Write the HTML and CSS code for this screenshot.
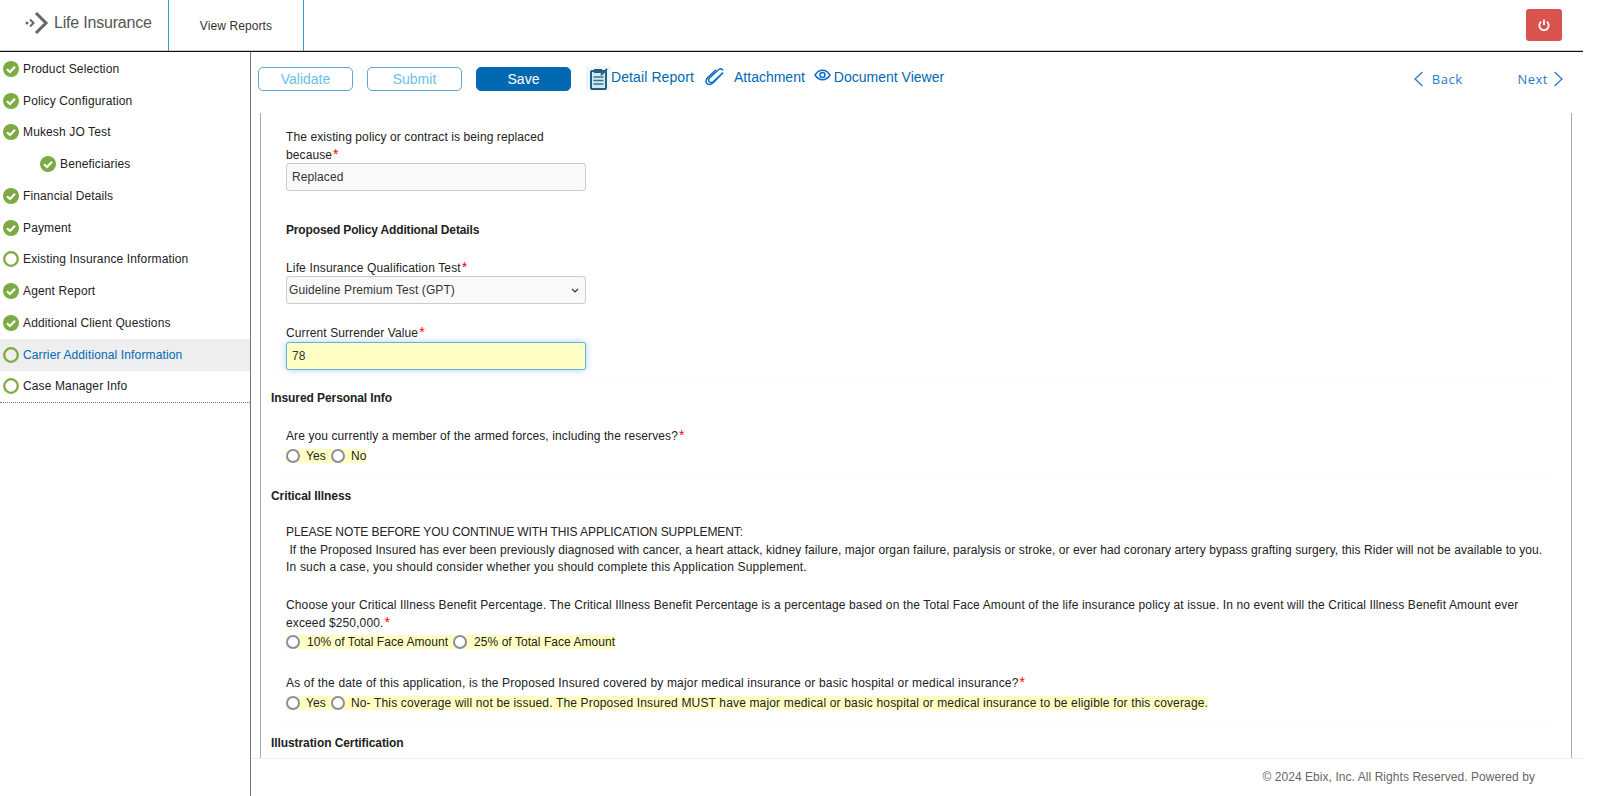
FILE: index.html
```html
<!DOCTYPE html>
<html lang="en">
<head>
<meta charset="utf-8">
<title>Life Insurance</title>
<link rel="stylesheet" href="styles.css">
</head>
<body>
<header class="topbar">
  <div class="brand">
    <svg class="brand-mark" width="24" height="24" viewBox="0 0 24 24"><circle cx="2" cy="12" r="1.500" fill="#666"/><path d="M5 8.500 8.500 12 5 15.500" fill="none" stroke="#666" stroke-width="2"/><path d="M11 2 21 12 11 22" fill="none" stroke="#666" stroke-width="3"/></svg>
    <span>Life Insurance</span>
  </div>
  <nav class="topnav"><a>View Reports</a></nav>
  <button class="power" aria-label="Log out"><svg width="14" height="14" viewBox="0 0 14 14"><path d="M4.200 3.600a4.700 4.700 0 1 0 5.600 0" fill="none" stroke="#fff" stroke-width="1.800"/><path d="M7 1.500v5.500" stroke="#fff" stroke-width="1.800"/></svg></button>
</header>
<div class="shell">
  <aside class="sidebar">
    <ul class="steps">
      <li class="step"><svg class="ic"><use href="#done"/></svg>Product Selection</li>
      <li class="step"><svg class="ic"><use href="#done"/></svg>Policy Configuration</li>
      <li class="step"><svg class="ic"><use href="#done"/></svg>Mukesh JO Test</li>
      <li class="step sub"><svg class="ic"><use href="#done"/></svg>Beneficiaries</li>
      <li class="step"><svg class="ic"><use href="#done"/></svg>Financial Details</li>
      <li class="step"><svg class="ic"><use href="#done"/></svg>Payment</li>
      <li class="step"><svg class="ic"><use href="#open"/></svg>Existing Insurance Information</li>
      <li class="step"><svg class="ic"><use href="#done"/></svg>Agent Report</li>
      <li class="step"><svg class="ic"><use href="#done"/></svg>Additional Client Questions</li>
      <li class="step active"><svg class="ic"><use href="#open"/></svg>Carrier Additional Information</li>
      <li class="step"><svg class="ic"><use href="#open"/></svg>Case Manager Info</li>
    </ul>
  </aside>
  <main class="main">
    <div class="toolbar">
      <button class="btn ghost">Validate</button>
      <button class="btn ghost">Submit</button>
      <button class="btn solid">Save</button>
      <a class="tool first"><svg width="25" height="25" viewBox="0 0 25 25"><rect width="25" height="25" fill="#f1f5f7"/><rect x="5" y="5" width="15" height="18" rx="1" fill="#d5e6ef" stroke="#1f5f85" stroke-width="2"/><rect x="8" y="3" width="8" height="4" fill="#1f5f85"/><path d="M7.500 11h10M7.500 14.500h10M7.500 18h10" stroke="#2f7396" stroke-width="1.300"/><path d="M15 9l6-6" stroke="#1f5f85" stroke-width="2"/></svg>Detail Report</a>
      <a class="tool clip"><svg width="20" height="20" viewBox="0 0 20 20"><path d="M18 5.500 8.500 14.500c-1.500 1.400-3.300 1.300-4.300.2-1-1.100-.8-2.700.6-4L13.800 2.500c2-1.700 4-.1 4 .9M18 5.800 9 15c-2.700 2.800-5.500 3.200-7 1.600C.5 15 .8 12.500 3 10.300L11 2.800" fill="none" stroke="#0a6cc4" stroke-width="1.500"/></svg><span>Attachment</span></a>
      <a class="tool eye"><svg width="17" height="12" viewBox="0 0 17 12"><path d="M1 6c2-3.200 4.500-4.800 7.500-4.800S14 2.800 16 6c-2 3.200-4.500 4.800-7.500 4.800S3 9.200 1 6z" fill="none" stroke="#0a6cc4" stroke-width="1.500"/><circle cx="8.500" cy="6" r="2.500" fill="none" stroke="#0a6cc4" stroke-width="1.500"/></svg>Document Viewer</a>
      <a class="pager back"><svg width="11" height="16" viewBox="0 0 11 16"><path d="M9.500 1 2 8l7.500 7" fill="none" stroke="#2a7bc8" stroke-width="1.300"/></svg>Back</a>
      <a class="pager next">Next<svg width="11" height="16" viewBox="0 0 11 16"><path d="M1.500 1 9 8l-7.500 7" fill="none" stroke="#2a7bc8" stroke-width="1.300"/></svg></a>
    </div>
    <div class="content">
      <section class="panel first-panel">
        <div class="field narrow">
          <label>The existing policy or contract is being replaced because<span class="req">*</span></label>
          <input class="control" type="text" value="Replaced" readonly>
        </div>
        <h4 class="sub-title">Proposed Policy Additional Details</h4>
        <div class="field narrow gap-a">
          <label class="wide-label">Life Insurance Qualification Test<span class="req">*</span></label>
          <select class="control"><option>Guideline Premium Test (GPT)</option></select>
        </div>
        <div class="field narrow gap-b">
          <label>Current Surrender Value<span class="req">*</span></label>
          <input class="control focus" type="text" value="78">
        </div>
      </section>
      <h3 class="section">Insured Personal Info</h3>
      <section class="panel">
        <div class="field q1">
          <p class="q">Are you currently a member of the armed forces, including the reserves?<span class="req">*</span></p>
          <div class="radios"><label><input type="radio" name="a"><span>Yes</span></label><label><input type="radio" name="a"><span>No</span></label></div>
        </div>
      </section>
      <h3 class="section s2">Critical Illness</h3>
      <section class="panel">
        <p class="note"><span class="l1">PLEASE NOTE BEFORE YOU CONTINUE WITH THIS APPLICATION SUPPLEMENT:</span><br>&nbsp;If the Proposed Insured has ever been previously diagnosed with cancer, a heart attack, kidney failure, major organ failure, paralysis or stroke, or ever had coronary artery bypass grafting surgery, this Rider will not be available to you.<br><span class="l3">In such a case, you should consider whether you should complete this Application Supplement.</span></p>
        <div class="field q2">
          <p class="q">Choose your Critical Illness Benefit Percentage. The Critical Illness Benefit Percentage is a percentage based on the Total Face Amount of the life insurance policy at issue. In no event will the Critical Illness Benefit Amount ever exceed $250,000.<span class="req">*</span></p>
          <div class="radios wide"><label><input type="radio" name="b"><span>10% of Total Face Amount</span></label><label><input type="radio" name="b"><span>25% of Total Face Amount</span></label></div>
        </div>
        <div class="field q3">
          <p class="q">As of the date of this application, is the Proposed Insured covered by major medical insurance or basic hospital or medical insurance?<span class="req">*</span></p>
          <div class="radios long"><label><input type="radio" name="c"><span>Yes</span></label><label><input type="radio" name="c"><span>No- This coverage will not be issued. The Proposed Insured MUST have major medical or basic hospital or medical insurance to be eligible for this coverage.</span></label></div>
        </div>
      </section>
      <h3 class="section s3">Illustration Certification</h3>
    </div>
    <footer class="footer">© 2024 Ebix, Inc. All Rights Reserved. Powered by</footer>
  </main>
</div>
<svg class="defs" width="0" height="0">
  <symbol id="done" viewBox="0 0 16 16"><circle cx="8" cy="8" r="8" fill="#7dab43"/><path d="M4 8.300l3 2.700 5-5.300" fill="none" stroke="#fff" stroke-width="2.200"/></symbol>
  <symbol id="open" viewBox="0 0 16 16"><circle cx="8" cy="8" r="6.800" fill="none" stroke="#7dab43" stroke-width="2.300"/></symbol>
</svg>
</body>
</html>
```
FILE: styles.css
```css
* { box-sizing: border-box; }
html, body { margin: 0; height: 796px; overflow: hidden; background: #fff; }
body { font: 12px/18px "Liberation Sans", Arial, sans-serif; letter-spacing: .1px; color: #222; display: flex; flex-direction: column; }
.defs { position: absolute; }

.topbar { flex: 0 0 52px; width: 1583px; display: flex; align-items: stretch; border-bottom: 1px solid #111; box-shadow: inset 0 -1px 0 #ccc; }
.brand { width: 169px; display: flex; align-items: center; padding: 0 0 5px 25px; gap: 5px; font-size: 16px; letter-spacing: -.2px; color: #555; border-right: 1px solid #2f9bd8; }
.topnav { width: 135px; display: flex; align-items: center; justify-content: center; border-right: 1px solid #2f9bd8; color: #333; }
.power { margin: 9px 21px 0 auto; width: 36px; height: 32px; border: 0; border-radius: 3px; background: #d9534f; display: flex; align-items: center; justify-content: center; padding: 0; }

.shell { flex: 1; display: flex; min-height: 0; }
.sidebar { flex: 0 0 251px; border-right: 1px solid #777; padding-top: 1px; }
.steps { list-style: none; margin: 0; padding: 0; border-bottom: 1px dotted #777; }
.step { height: 31.75px; display: flex; align-items: center; gap: 4px; padding-left: 3px; color: #222; letter-spacing: .13px; }
.step.sub { padding-left: 40px; }
.step.active { background: #eee; color: #0069b1; }
.ic { width: 16px; height: 16px; flex: none; }

.main { flex: 1; min-width: 0; display: flex; flex-direction: column; }
.toolbar { flex: 0 0 61px; display: flex; align-items: flex-start; padding: 15px 0 0 7px; width: 1313px; }
.btn { width: 95px; height: 24px; border-radius: 5px; font: 14px "Liberation Sans", Arial, sans-serif; padding: 0; margin-right: 14px; }
.ghost { background: #fff; border: 1px solid #5ba8d8; color: #6cc0e6; }
.solid { background: #0069b1; border: 1px solid #0069b1; color: #fff; }
.tool { display: flex; align-items: center; color: #0069b1; font-size: 14px; height: 24px; margin-top: -2px; }
.first { margin-left: 1px; }
.first svg { margin-top: 2px; }
.clip { margin-left: 11px; letter-spacing: 0; }
.clip svg { margin-right: 9px; }
.eye { margin-left: 9px; letter-spacing: 0; }
.eye svg { margin-right: 3px; margin-top: -4px; }
.pager { display: flex; align-items: center; gap: 8px; color: #2a7bc8; font: 13px "Open Sans", sans-serif; letter-spacing: .5px; height: 24px; }
.back { margin-left: auto; }
.next { margin-left: 55px; gap: 5px; }

.content { flex: 1; min-height: 0; overflow: hidden; margin-left: 9px; border-left: 1px solid #aaa; border-right: 1px solid #aaa; padding: 0 0 0 15px; width: 1312px; }
.panel { border: 1px solid #fcfcfc; border-top: 0; border-radius: 0 0 4px 4px; padding: 0 0 0 9px; width: 1281px; }
.first-panel { padding-top: 15px; padding-bottom: 7px; }
.field { margin: 0; }
.narrow { width: 300px; }
label, .q, .note { display: block; margin: 0; }
.narrow label { margin-bottom: -1px; }
.narrow.gap-b label { margin-bottom: 0; }
.wide-label { letter-spacing: .15px; }
.req { color: #f00; font-size: 14px; line-height: 10px; margin-left: 1px; }
.control { display: block; width: 100%; height: 28px; padding: 0 5px; border: 1px solid #ccc; border-radius: 3px; background: #f9f9f9; font: 12px "Liberation Sans", Arial, sans-serif; letter-spacing: .1px; color: #333; }
select.control { appearance: none; -webkit-appearance: none; padding: 0 0 0 2px; background: #f9f9f9 url("data:image/svg+xml,%3Csvg xmlns='http://www.w3.org/2000/svg' width='8' height='5'%3E%3Cpath d='M1 1l3 3 3-3' fill='none' stroke='%23333' stroke-width='1.200'/%3E%3C/svg%3E") no-repeat right 6px center; }
.control.focus { background: #ffffc4; border-color: #66afe9; box-shadow: 0 0 6px rgba(102, 175, 233, .6); outline: 0; }
.sub-title { font-size: 12px; line-height: 18px; margin: 30px 0 0; color: #222; letter-spacing: -.15px; }
.gap-a { margin-top: 20px; }
.gap-b { margin-top: 20px; }
.section { font-size: 12px; line-height: 18px; margin: 11px 0 0 -5px; color: #222; letter-spacing: -.08px; }
.s2 { margin-top: 12px; }
.s3 { margin-top: 10px; }
.q1 { padding: 20px 0 9px; }
.q1 .q { margin-bottom: 2px; }
.radios { display: flex; gap: 0; height: 18px; align-items: center; }
.radios label { display: flex; align-items: center; height: 14px; background: #ffffc4; }
.radios input { appearance: none; -webkit-appearance: none; width: 14px; height: 14px; margin: 0 6px 0 0; border: 2px solid #8c8ca3; border-radius: 50%; background: #fff; }
.radios span { margin-right: 5px; }
.radios label:last-child span { margin-right: 0; }
.wide { letter-spacing: .05px; }
.wide input { margin-right: 7px; }
.long label:last-child { letter-spacing: .16px; }
.note { padding-top: 19px; width: 1268px; line-height: 17.5px; letter-spacing: .08px; }
.note .l1 { letter-spacing: -.1px; }
.note .l3 { letter-spacing: .18px; }
.q2 { padding-top: 20.5px; }
.q2 .q { width: 1240px; line-height: 17.5px; letter-spacing: .13px; margin-bottom: .5px; }
.q3 { padding-top: 23px; padding-bottom: 11px; }
.q3 .q { letter-spacing: .17px; margin-bottom: 2px; }

.footer { flex: 0 0 38px; width: 1332px; border-top: 1px solid #eee; text-align: right; padding: 9px 48px 0 0; color: #666; line-height: 18px; letter-spacing: .06px; }
```
